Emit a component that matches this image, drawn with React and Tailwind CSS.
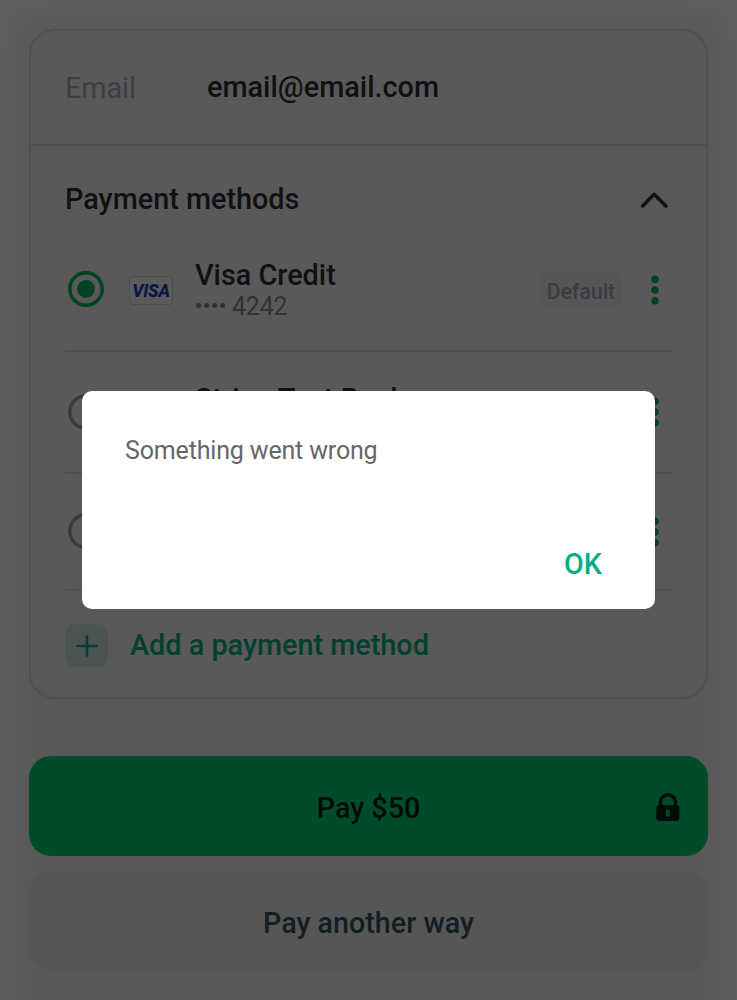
function Radio({ checked }) {
  return (
    <svg viewBox="0 0 38 38" className="h-[38px] w-[38px] shrink-0" fill="none">
      <circle cx="19" cy="19" r="16.2" strokeWidth="3.5" stroke={checked ? "#004222" : "#393b40"} />
      {checked && <circle cx="19" cy="19" r="8.9" fill="#004222" />}
    </svg>
  );
}

function Dots() {
  return (
    <svg viewBox="0 0 8 30" className="mt-px h-[30px] w-2 shrink-0" fill="#004222">
      <circle cx="4" cy="4.2" r="3.8" />
      <circle cx="4" cy="15" r="3.8" />
      <circle cx="4" cy="25.7" r="3.8" />
    </svg>
  );
}

function VisaCard() {
  return (
    <div className="flex h-[29px] w-[44px] items-center justify-center rounded-[4px] border border-[#4d4d4d] bg-[#5b5b5b]">
      <span className="pt-[2px] font-[Roboto,sans-serif] text-[17.5px] leading-none font-extrabold tracking-[-0.2px] text-[#0a144a] italic">
        VISA
      </span>
    </div>
  );
}

function MethodRow({ checked, logo, name, digits, badge, className }) {
  return (
    <div className={`flex items-center border-b-2 border-[#505050] pr-[13px] pl-[2px] ${className}`}>
      <Radio checked={checked} />
      <div className="ml-[24px] w-[66px] pt-[3px]">{logo}</div>
      <div className="flex-1 self-start pt-[31px]">
        <div className="text-[28.8px] leading-8 font-medium text-[#101015]">{name}</div>
        {digits && (
          <div className="flex items-center gap-[7px] pt-px pl-px text-[25px] leading-[30px] tracking-[-0.2px] text-[#303238]">
            <span className="-mt-[3px] flex gap-[3px]">
              <i className="h-[5px] w-[5px] rounded-full bg-[#303238]" />
              <i className="h-[5px] w-[5px] rounded-full bg-[#303238]" />
              <i className="h-[5px] w-[5px] rounded-full bg-[#303238]" />
              <i className="h-[5px] w-[5px] rounded-full bg-[#303238]" />
            </span>
            {digits}
          </div>
        )}
      </div>
      {badge && (
        <span className="mt-[2px] mr-[29px] flex h-9 w-[82px] items-center justify-center rounded-[7px] bg-[#565657] pt-[3px] text-[21.2px] font-medium text-[#393c42]">
          {badge}
        </span>
      )}
      <Dots />
    </div>
  );
}

export default function App() {
  return (
    <div className="h-[1000px] w-[737px] overflow-hidden">
      <div className="relative h-[1060px] bg-[#595959] px-[29px] pt-[29px] font-[Roboto,sans-serif] shadow-[inset_0_0_44px_#646464]">
        <section className="h-[670px] rounded-[26px] border-2 border-[#515151]">
          <div className="flex h-[115px] items-center border-b-2 border-[#505050] px-[34px]">
            <span className="w-[142px] pt-[2px] text-[28.7px] text-[#3b3e43]">Email</span>
            <span className="text-[28.85px] font-medium text-[#101015]">email@email.com</span>
          </div>
          <div className="px-[34px]">
            <div className="flex h-[82px] items-center justify-between pt-[25px] pr-[4px]">
              <h2 className="text-[28.8px] font-medium text-[#101015]">Payment methods</h2>
              <svg viewBox="0 0 28 18" className="h-[18px] w-7" fill="none" stroke="#101015" strokeWidth="3.5" strokeLinecap="round" strokeLinejoin="round">
                <path d="M2.600 15 14.200 3.200 25.800 15" />
              </svg>
            </div>
            <MethodRow checked logo={<VisaCard />} name="Visa Credit" digits="4242" badge="Default" className="h-[124px]" />
            <MethodRow name="Stripe Test Bank" className="h-[122px] pb-px" />
            <MethodRow className="h-[117px] pb-px" />
            <div className="flex h-[106px] items-center gap-[22px] pt-[3px]">
              <span className="flex h-[43px] w-[43px] items-center justify-center rounded-[10px] bg-[#4c5453]">
                <svg viewBox="0 0 22 22" className="h-[22px] w-[22px]" stroke="#00402f" strokeWidth="2.6" strokeLinecap="round">
                  <path d="M11 1.500v19M1.500 11h19" />
                </svg>
              </span>
              <span className="text-[28.8px] font-medium text-[#00402f]">Add a payment method</span>
            </div>
          </div>
        </section>

        <button className="relative mt-[57px] flex h-[100px] w-full items-center justify-center rounded-[22px] bg-[#004b29] pt-[5px] text-[28.7px] font-medium text-[#000c06]">
          Pay $50
          <svg viewBox="0 0 24 29" className="absolute top-[37px] right-[28px] h-[29px] w-6" fill="none">
            <path d="M4.500 13V9.200a7.400 7.400 0 0 1 14.800 0V13" stroke="#000c06" strokeWidth="3.4" />
            <path fillRule="evenodd" fill="#000c06" d="M3.200 12h17.200a3 3 0 0 1 3 3v10a3 3 0 0 1-3 3H3.200a3 3 0 0 1-3-3V15a3 3 0 0 1 3-3zM11.800 16.600a2 2 0 0 0-2 2v3.200a2 2 0 0 0 4 0v-3.200a2 2 0 0 0-2-2z" />
          </svg>
        </button>
        <button className="mt-[15px] flex h-[100px] w-full items-center justify-center rounded-[22px] bg-[#565656] pt-[5px] text-[28.7px] font-medium text-[#141d21]">
          Pay another way
        </button>

        <div role="dialog" className="absolute top-[391px] left-[82px] flex h-[218px] w-[573px] flex-col justify-between rounded-[10px] bg-white pt-[43px] pr-[53px] pb-[28px] pl-[43px]">
          <p className="text-[25px] leading-[34px] tracking-[-0.16px] text-[#666666]">Something went wrong</p>
          <button className="self-end text-[28.7px] leading-[34px] font-medium text-[#0aac82]">OK</button>
        </div>
      </div>
    </div>
  );
}
